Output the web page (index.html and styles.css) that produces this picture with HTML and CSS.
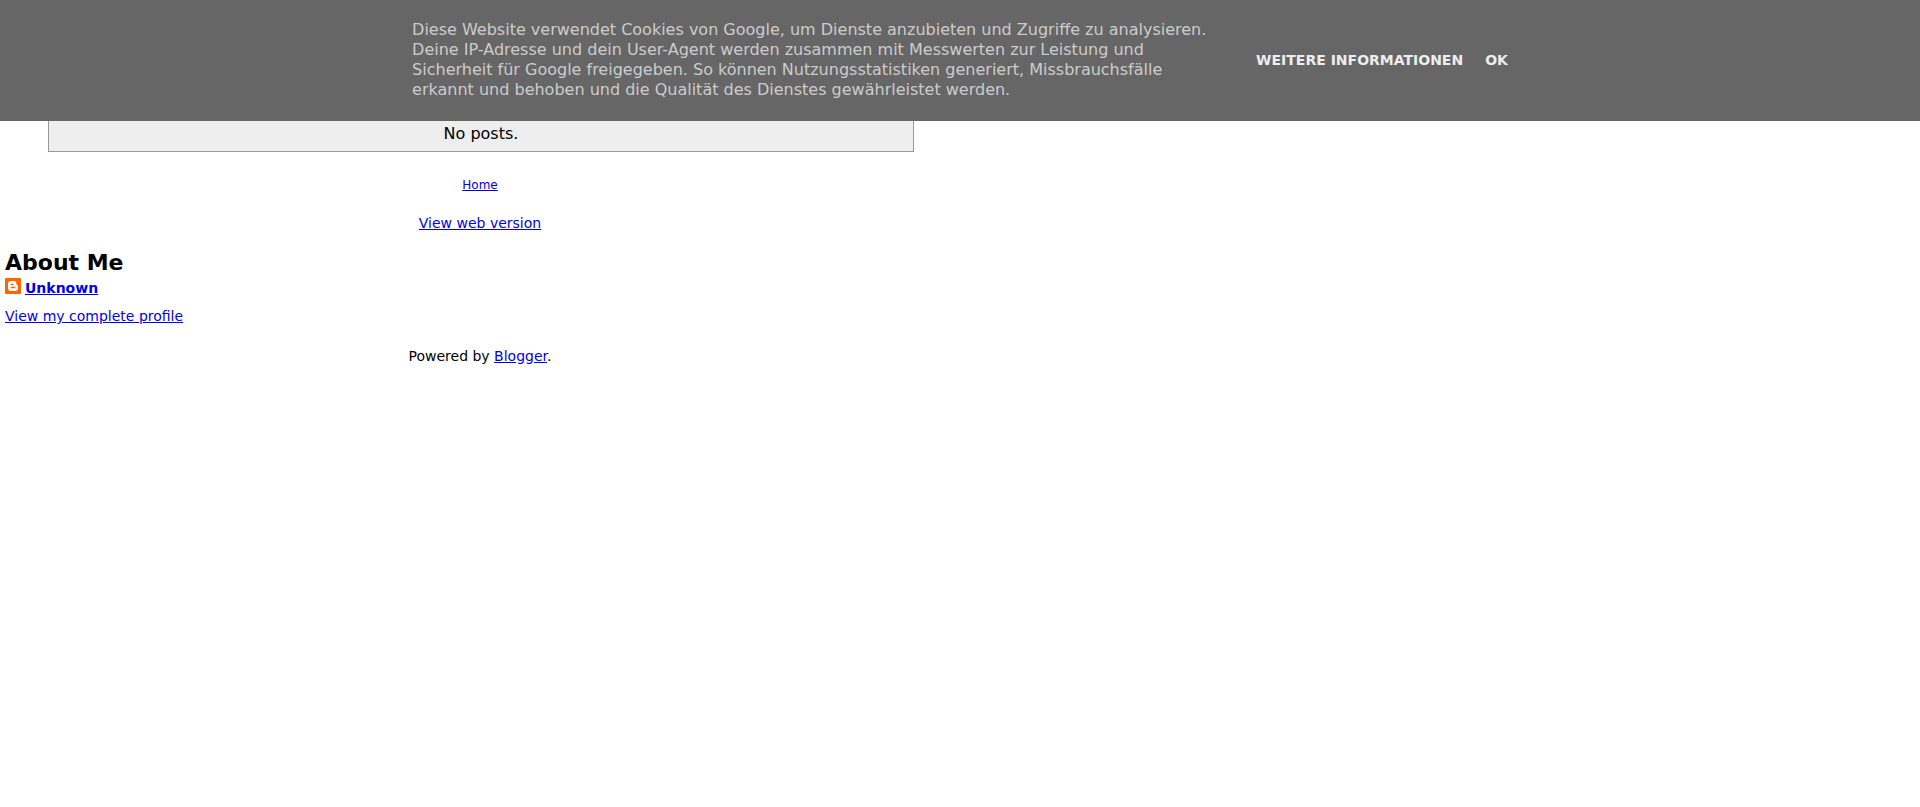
FILE: index.html
```html
<!DOCTYPE html>
<html lang="en">
<head>
    <meta charset="UTF-8">
    <meta name="viewport" content="width=device-width, initial-scale=1.0">
    <title>Blog</title>
    <link rel="stylesheet" href="styles.css">
</head>
<body>
    <div class="cookie-bar" lang="de">
        <p class="cookie-text">
            Diese Website verwendet Cookies von Google, um Dienste anzubieten und Zugriffe zu analysieren. Deine IP-Adresse und dein User-Agent werden zusammen mit Messwerten zur Leistung und Sicherheit für Google freigegeben. So können Nutzungsstatistiken generiert, Missbrauchsfälle erkannt und behoben und die Qualität des Dienstes gewährleistet werden.
        </p>
        <div class="cookie-links">
            <a href="#info">Weitere Informationen</a>
            <a href="#ok">OK</a>
        </div>
    </div>

    <div class="page">
        <main>
            <div class="status-msg">No posts.</div>
            <nav class="pager">
                <a class="home-link" href="#home">Home</a>
                <a href="#web">View web version</a>
            </nav>
        </main>

        <section class="profile">
            <h2>About Me</h2>
            <a class="profile-name" href="#profile">
                <svg class="profile-icon" width="16" height="16" viewBox="0 0 16 16" aria-hidden="true">
                    <rect width="16" height="16" rx="1" fill="#ff6600"/>
                    <path d="M6 3h2.500a3 3 0 0 1 3 3v.5c0 .4.3.5.700.5.500 0 .8.300.8.800V10a3 3 0 0 1-3 3H6a3 3 0 0 1-3-3V6a3 3 0 0 1 3-3z" fill="#fff"/>
                    <path d="M6.300 6.500h1.700M6.300 9.500h3.400" stroke="#ff6600" stroke-width="1.300" stroke-linecap="round"/>
                </svg>
                <span>Unknown</span>
            </a>
            <a href="#profile">View my complete profile</a>
        </section>

        <footer class="footer">
            Powered by <a href="#blogger">Blogger</a>.
        </footer>
    </div>
</body>
</html>
```

FILE: styles.css
```css
* {
    margin: 0;
    padding: 0;
    box-sizing: border-box;
}

body {
    font-family: "DejaVu Sans", sans-serif;
    font-size: 14px;
    line-height: 18px;
    background: #fff;
    color: #000;
}

a {
    color: #0000ee;
}

.cookie-bar {
    display: flex;
    align-items: center;
    justify-content: center;
    gap: 40px;
    padding: 20px 16px 21px;
    background: #666;
    color: #ccc;
}

.cookie-text {
    max-width: 804px;
    font-size: 16px;
    line-height: 20px;
}

.cookie-links {
    display: flex;
    gap: 22px;
    white-space: nowrap;
}

.cookie-links a {
    color: #eee;
    font-weight: bold;
    text-decoration: none;
    text-transform: uppercase;
}

.page {
    width: 50%;
}

.status-msg {
    box-sizing: content-box;
    width: 90%;
    margin-left: 5%;
    padding: 3px 0 8px;
    background: #eee;
    border: 1px solid #999;
    border-top: none;
    font-size: 16px;
    line-height: 19px;
    text-align: center;
}

.pager {
    display: flex;
    flex-direction: column;
    align-items: center;
    gap: 20px;
    padding-top: 24px;
}

.home-link {
    font-size: 12px;
}

.profile {
    padding: 17px 5px 0;
}

.profile h2 {
    font-size: 22px;
    line-height: 28px;
}

.profile-name {
    display: flex;
    gap: 4px;
    width: fit-content;
    margin-bottom: 10px;
    padding-top: 1px;
    font-weight: bold;
}

.profile-name span {
    padding-top: 1px;
}

.footer {
    padding-top: 22px;
    text-align: center;
}
```
